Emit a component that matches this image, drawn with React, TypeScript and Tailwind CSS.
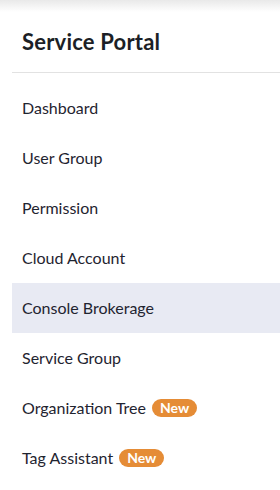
const items: { label: string; isNew?: boolean }[] = [
  { label: 'Dashboard' },
  { label: 'User Group' },
  { label: 'Permission' },
  { label: 'Cloud Account' },
  { label: 'Console Brokerage' },
  { label: 'Service Group' },
  { label: 'Organization Tree', isNew: true },
  { label: 'Tag Assistant', isNew: true },
]

const active = 'Console Brokerage'

export default function App() {
  return (
    <div className="w-[280px] h-[490px] bg-white overflow-hidden text-[#1f2430] font-['Lato','Noto_Sans',sans-serif]">
      <div className="h-[12px] bg-gradient-to-b from-[#e9e9e9] to-white" />
      <div className="ml-3">
        <div className="h-[60px] px-[10px] pt-[13px] text-[22px] font-bold tracking-[0.2px] text-[#1c1f26]">
          Service Portal
        </div>
        <div className="h-px bg-[#e2e2e2]" />
        <ul className="mt-[10px]">
          {items.map(item => (
            <li
              key={item.label}
              className={`h-[50px] px-[10px] flex items-center gap-[6px] text-[16px] ${item.label === active ? 'bg-[#e8eaf3]' : ''}`}
            >
              <span>{item.label}</span>
              {item.isNew && (
                <span className="h-[18px] px-[8px] rounded-full bg-[#e58c36] text-white text-[14px] font-bold leading-[18px]">
                  New
                </span>
              )}
            </li>
          ))}
        </ul>
      </div>
    </div>
  )
}
